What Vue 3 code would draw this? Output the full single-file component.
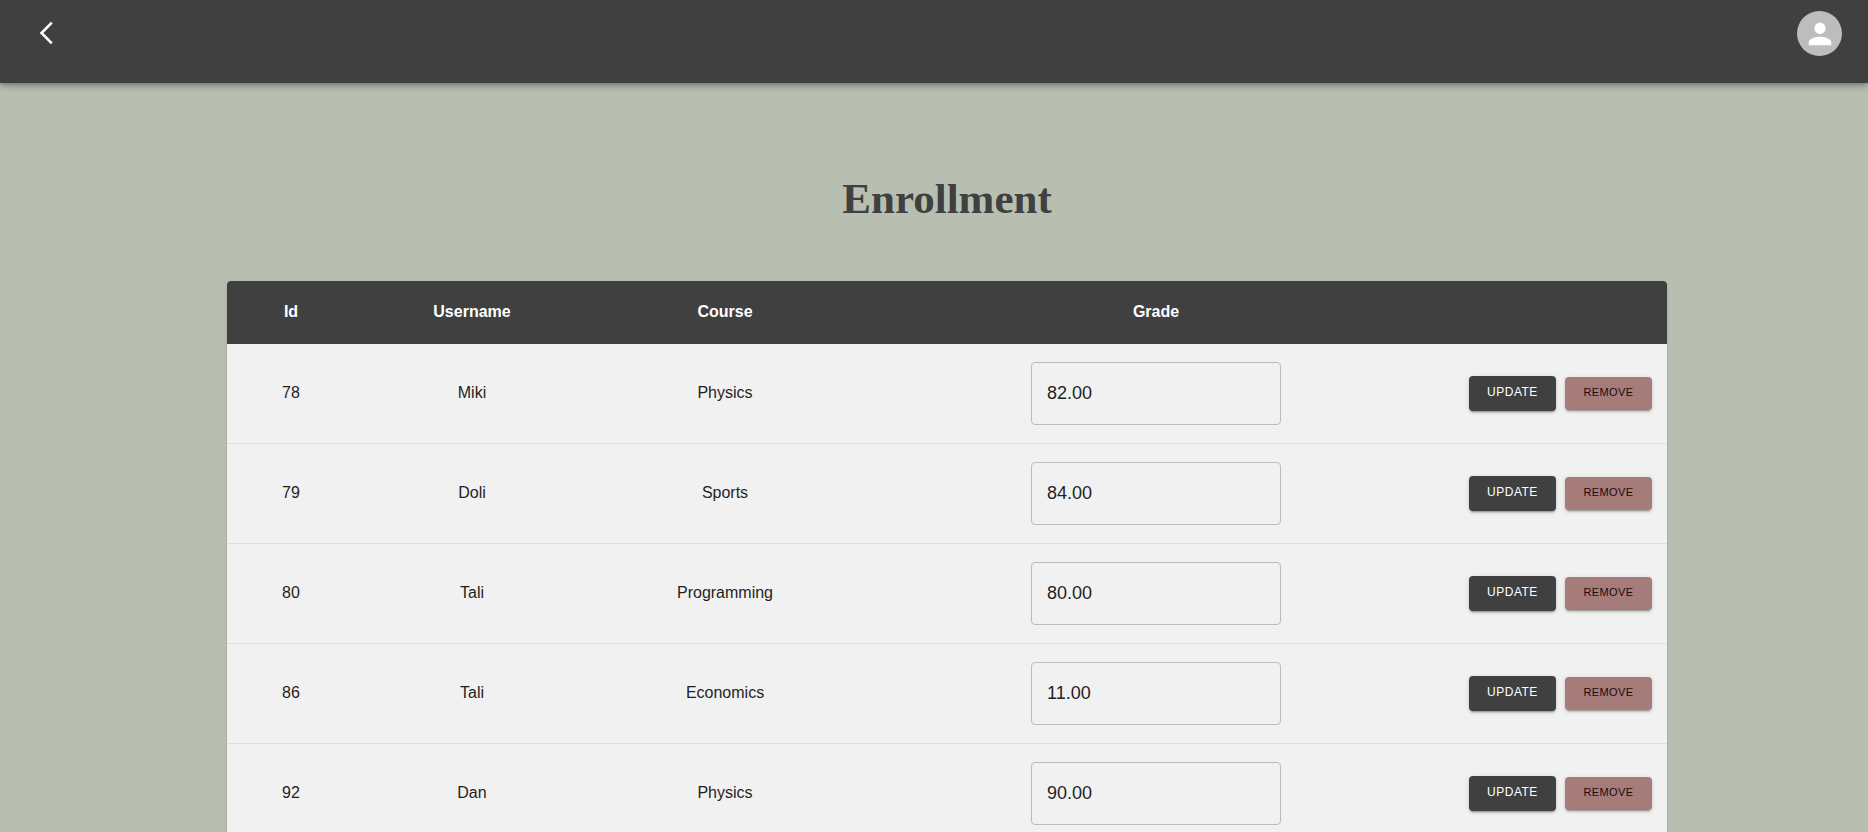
<template>
  <div class="page">
    <header class="top-bar">
      <button class="back-btn" type="button" aria-label="Back">
        <svg width="24" height="24" viewBox="0 0 24 24"><path d="M19.8 1.7 L9.5 12 L19.8 22.3" fill="none" stroke="#fff" stroke-width="2.6" /></svg>
      </button>
      <div class="avatar">
        <svg width="34" height="34" viewBox="0 0 24 24"><path fill="#fff" d="M12 12c2.21 0 4-1.79 4-4s-1.79-4-4-4-4 1.79-4 4 1.79 4 4 4zm0 2c-2.67 0-8 1.34-8 4v2h16v-2c0-2.66-5.33-4-8-4z" /></svg>
      </div>
    </header>

    <main class="content">
      <h1 class="title">Enrollment</h1>
      <table class="enroll-table">
        <colgroup>
          <col class="col-id" />
          <col class="col-user" />
          <col class="col-course" />
          <col class="col-grade" />
          <col class="col-actions" />
        </colgroup>
        <thead>
          <tr>
            <th>Id</th>
            <th>Username</th>
            <th>Course</th>
            <th>Grade</th>
            <th></th>
          </tr>
        </thead>
        <tbody>
          <tr v-for="row in rows" :key="row.id">
            <td>{{ row.id }}</td>
            <td>{{ row.username }}</td>
            <td>{{ row.course }}</td>
            <td><input class="grade-input" type="text" :value="row.grade" /></td>
            <td>
              <div class="actions">
                <button class="btn btn-update" type="button">Update</button>
                <button class="btn btn-remove" type="button">Remove</button>
              </div>
            </td>
          </tr>
        </tbody>
      </table>
    </main>
  </div>
</template>

<script setup>
const rows = [
  { id: 78, username: 'Miki', course: 'Physics', grade: '82.00' },
  { id: 79, username: 'Doli', course: 'Sports', grade: '84.00' },
  { id: 80, username: 'Tali', course: 'Programming', grade: '80.00' },
  { id: 86, username: 'Tali', course: 'Economics', grade: '11.00' },
  { id: 92, username: 'Dan', course: 'Physics', grade: '90.00' }
];
</script>

<style>
html,
body {
  margin: 0;
  overflow: hidden;
  background: #b8bfb0;
}
</style>

<style scoped>
.page {
  min-height: 832px;
  font-family: "Liberation Sans", Arial, sans-serif;
  background: #b8bfb0;
}

.top-bar {
  display: flex;
  justify-content: space-between;
  align-items: flex-start;
  height: 83px;
  padding: 10px 26px 0 32px;
  box-sizing: border-box;
  background: #404040;
  box-shadow: 0 2px 4px -1px rgba(0, 0, 0, 0.2), 0 4px 5px 0 rgba(0, 0, 0, 0.14), 0 1px 10px 0 rgba(0, 0, 0, 0.12);
}

.back-btn {
  display: flex;
  padding: 0;
  margin-top: 11px;
  border: none;
  background: none;
}

.avatar {
  display: flex;
  align-items: center;
  justify-content: center;
  width: 45px;
  height: 45px;
  margin-top: 1px;
  border-radius: 50%;
  background: #bdbdbd;
}

.content {
  padding: 87px 0 0 26px;
}

.title {
  margin: 0 0 53px;
  height: 58px;
  line-height: 58px;
  font-family: "Liberation Serif", "Times New Roman", serif;
  font-size: 43px;
  font-weight: 700;
  text-align: center;
  color: #404040;
}

.enroll-table {
  width: 1440px;
  margin: 0 auto;
  border-collapse: separate;
  border-spacing: 0;
  table-layout: fixed;
  border-radius: 4px;
  overflow: hidden;
  background: #f1f1f1;
  box-shadow: 0 2px 1px -1px rgba(0, 0, 0, 0.2), 0 1px 1px 0 rgba(0, 0, 0, 0.14), 0 1px 3px 0 rgba(0, 0, 0, 0.12);
}

.col-id { width: 128px; }
.col-user { width: 234px; }
.col-course { width: 272px; }
.col-grade { width: 590px; }
.col-actions { width: 216px; }

th {
  height: 63px;
  padding: 0 0 1px;
  box-sizing: border-box;
  font-size: 16px;
  font-weight: 700;
  color: #fff;
  background: #404040;
  text-align: center;
}

td {
  height: 100px;
  padding: 0 0 1px;
  box-sizing: border-box;
  border-bottom: 1px solid #e0e0e0;
  font-size: 16px;
  color: #1f1f1f;
  text-align: center;
}

.grade-input {
  display: block;
  width: 250px;
  height: 63px;
  margin: 0 auto;
  padding: 0 15px;
  box-sizing: border-box;
  border: 1px solid #bbb;
  border-radius: 4px;
  font-family: inherit;
  font-size: 18px;
  color: #1f1f1f;
  background: transparent;
}

.actions {
  display: flex;
  justify-content: flex-end;
  align-items: center;
  gap: 9px;
  padding-right: 15px;
}

.btn {
  width: 87px;
  padding: 0 0 2px;
  border: none;
  border-radius: 4px;
  font-family: inherit;
  text-transform: uppercase;
  box-shadow: 0 3px 1px -2px rgba(0, 0, 0, 0.2), 0 2px 2px 0 rgba(0, 0, 0, 0.14), 0 1px 5px 0 rgba(0, 0, 0, 0.12);
}

.btn-update {
  height: 35px;
  font-size: 12px;
  letter-spacing: 0.5px;
  color: #fff;
  background: #404040;
}

.btn-remove {
  height: 33px;
  font-size: 11px;
  letter-spacing: 0.4px;
  color: #1a0a0a;
  background: #a67c7a;
}
</style>
